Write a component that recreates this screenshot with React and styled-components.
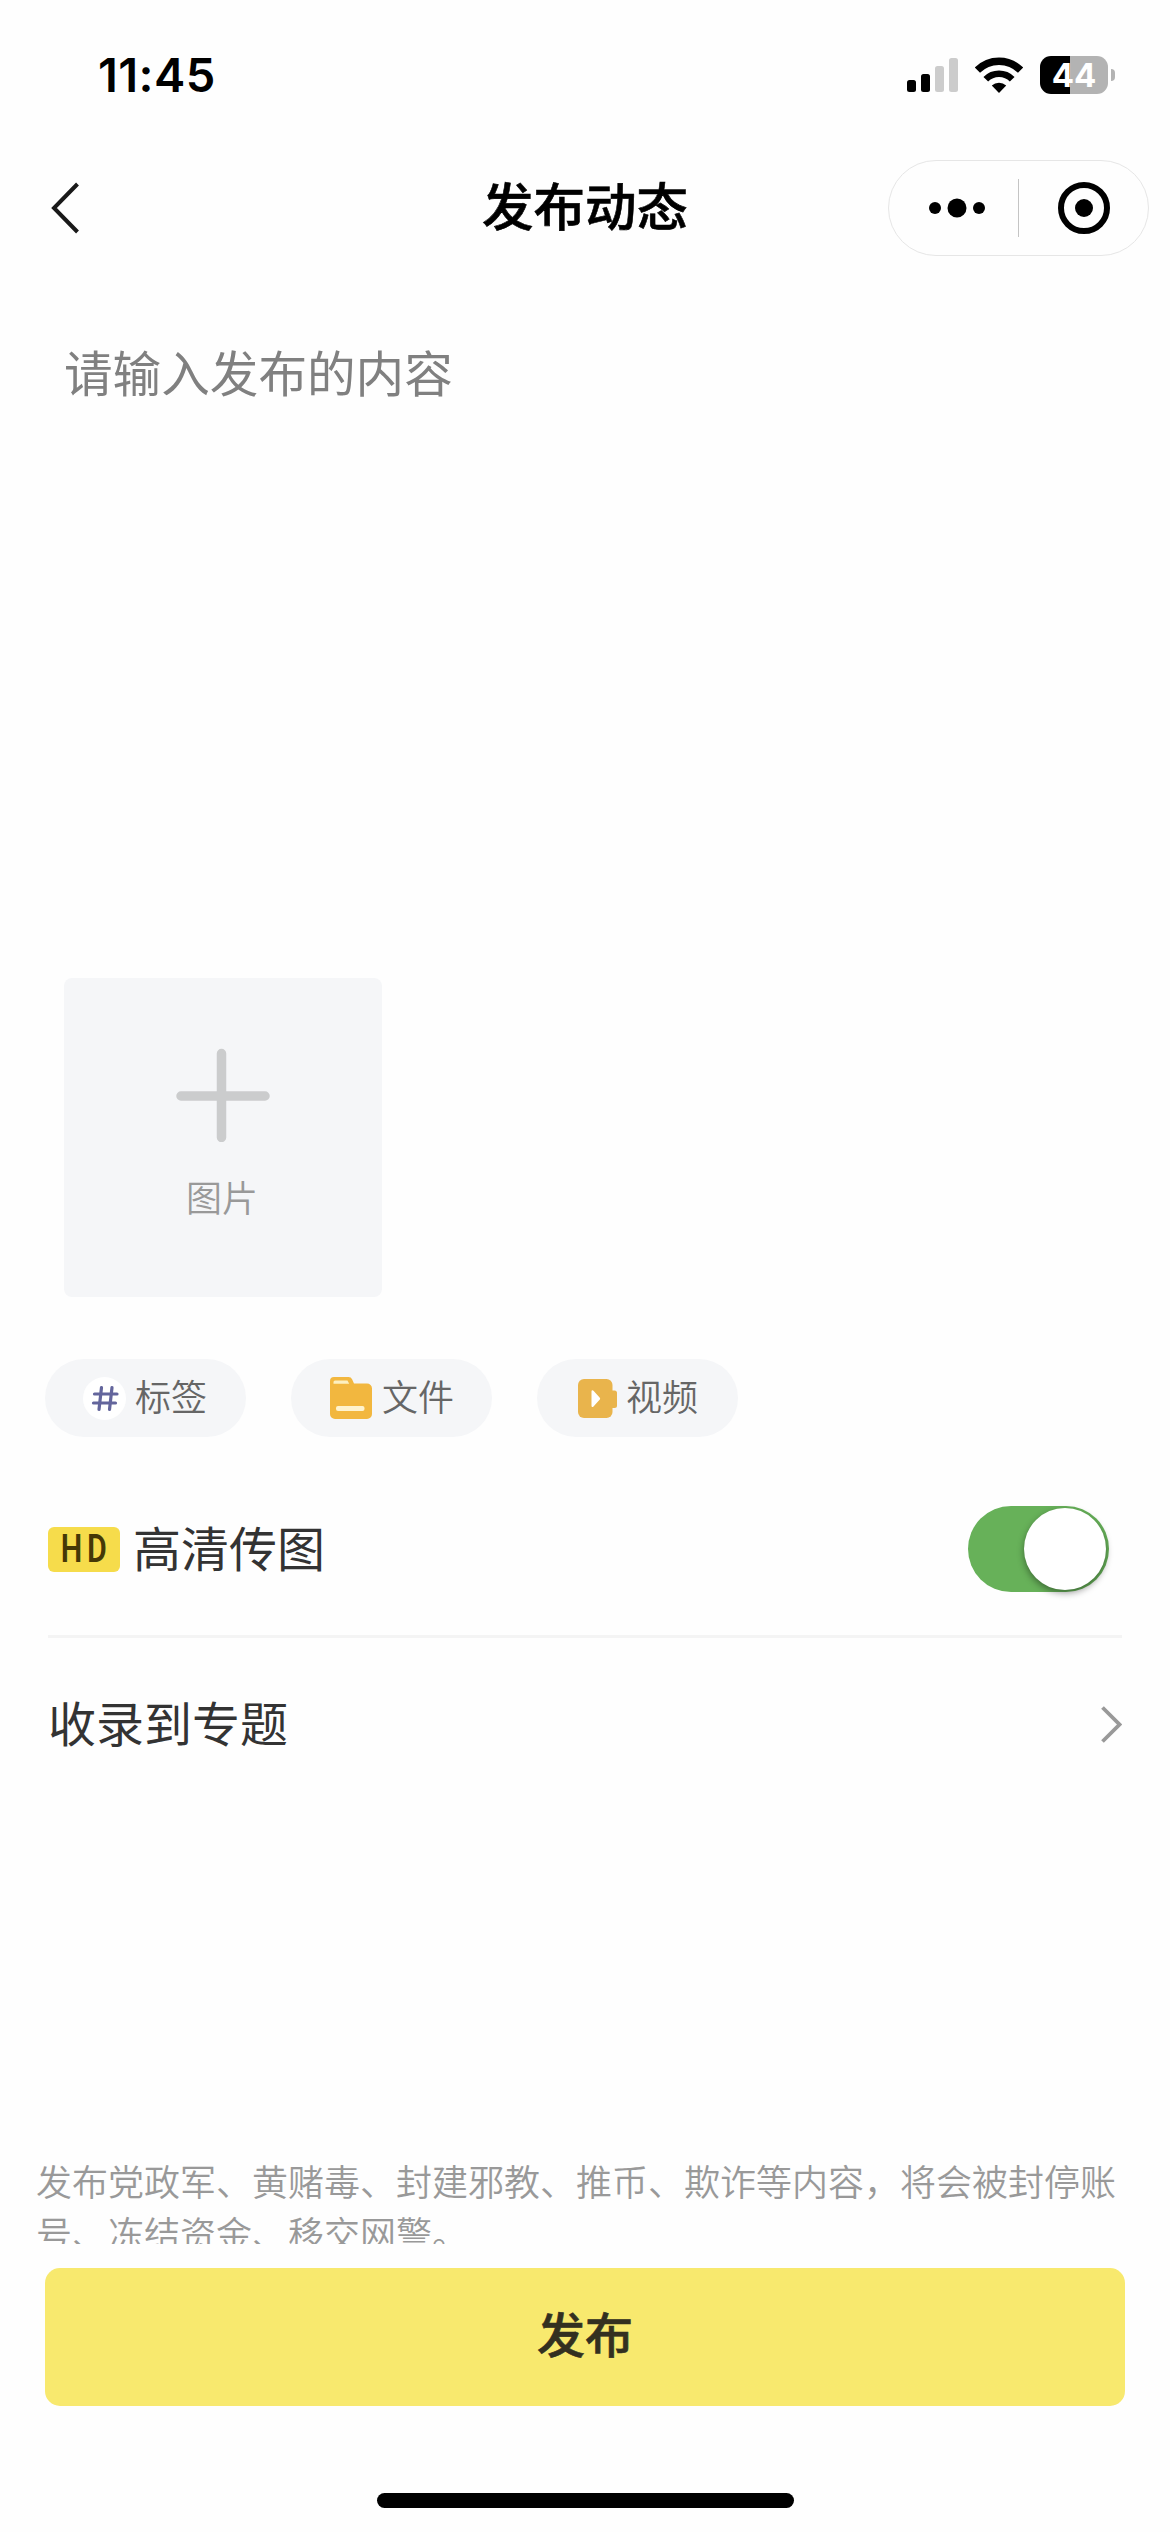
import React, { useState } from 'react';
import styled, { createGlobalStyle } from 'styled-components';

const GlobalStyle = createGlobalStyle`
  * {
    box-sizing: border-box;
  }

  body {
    margin: 0;
    background-color: #fefefe;
    font-family: "Noto Sans CJK SC", sans-serif;
  }
`;

const Screen = styled.div`
  width: 1170px;
  height: 2532px;
  display: flex;
  flex-direction: column;
  overflow: hidden;
  background-color: #fefefe;
`;

const StatusBar = styled.div`
  height: 149px;
  padding: 0 55px 0 98px;
  display: flex;
  align-items: center;
  justify-content: space-between;
  flex-shrink: 0;
`;

const Time = styled.span`
  font-family: Inter, sans-serif;
  font-size: 47px;
  font-weight: 600;
  line-height: 56px;
  letter-spacing: 0.4px;
  color: #000;
`;

const StatusIcons = styled.div`
  display: flex;
  align-items: center;
  gap: 17px;
`;

const Battery = styled.div`
  display: flex;
  align-items: center;
  gap: 3px;
`;

const BatteryBody = styled.div`
  width: 68px;
  height: 38px;
  border-radius: 11px;
  background: linear-gradient(to right, #000 ${(props) => props.$level}%, #b3b3b3 ${(props) => props.$level}%);
  color: #fff;
  font-family: Inter, sans-serif;
  font-size: 33px;
  font-weight: 700;
  line-height: 38px;
  text-align: center;
`;

const BatteryTip = styled.div`
  width: 4px;
  height: 12px;
  border-radius: 0 5px 5px 0;
  background-color: #b3b3b3;
`;

const NavBar = styled.div`
  height: 117px;
  padding: 0 21px 0 50px;
  display: grid;
  grid-template-columns: 1fr 240px 1fr;
  align-items: center;
  flex-shrink: 0;
`;

const BackButton = styled.button`
  display: flex;
  padding: 0;
  border: none;
  background-color: transparent;
  cursor: pointer;
`;

const Title = styled.h1`
  margin: 0 -20px 0 -49px;
  padding-bottom: 7px;
  font-size: 51.5px;
  font-weight: 500;
  line-height: 60px;
  text-align: center;
  white-space: nowrap;
  color: #000;
  -webkit-text-stroke: 0.6px #000;
`;

const Capsule = styled.div`
  justify-self: end;
  width: 261px;
  height: 96px;
  display: flex;
  align-items: center;
  border: 1px solid #e6e6e6;
  border-radius: 48px;
`;

const CapsuleButton = styled.button`
  width: 129px;
  display: flex;
  justify-content: center;
  padding: 0;
  padding-left: ${(props) => props.$shift || 0}px;
  border: none;
  background-color: transparent;
  cursor: pointer;
`;

const CapsuleLine = styled.div`
  width: 1px;
  height: 58px;
  background-color: #c4c4c4;
`;

const Content = styled.div`
  flex: 1;
  min-height: 0;
  display: flex;
  flex-direction: column;
  overflow: hidden;
`;

const Composer = styled.textarea`
  height: 712px;
  padding: 70px 64px 0;
  border: none;
  outline: none;
  resize: none;
  flex-shrink: 0;
  background-color: transparent;
  font-family: inherit;
  font-size: 48.6px;
  line-height: 70px;
  color: #333;

  &::placeholder {
    color: #808080;
    opacity: 1;
  }
`;

const Upload = styled.button`
  width: 318px;
  height: 319px;
  margin-left: 64px;
  padding: 70px 0 0;
  display: flex;
  flex-direction: column;
  align-items: center;
  flex-shrink: 0;
  border: none;
  border-radius: 8px;
  background-color: #f5f6f8;
  cursor: pointer;
`;

const UploadText = styled.span`
  margin-top: 27px;
  padding-right: 2px;
  font-family: "Noto Sans CJK SC", sans-serif;
  font-size: 36px;
  font-weight: 350;
  line-height: 54px;
  color: #999;
`;

const Chips = styled.div`
  margin: 62px 45px 0;
  display: flex;
  gap: 45px;
  flex-shrink: 0;
`;

const Chip = styled.button`
  width: 201px;
  height: 78px;
  padding: 0 0 0 ${(props) => props.$left}px;
  display: flex;
  align-items: center;
  gap: ${(props) => props.$gap}px;
  border: none;
  border-radius: 39px;
  background-color: #f5f6f8;
  white-space: nowrap;
  cursor: pointer;

  svg {
    flex-shrink: 0;
  }
`;

const ChipText = styled.span`
  padding-bottom: 6px;
  font-family: "Noto Sans CJK SC", sans-serif;
  font-size: 36px;
  font-weight: 350;
  line-height: 54px;
  color: #666;
`;

const Row = styled.div`
  height: ${(props) => props.$height}px;
  margin: ${(props) => props.$top || 0}px 48px 0;
  display: flex;
  align-items: center;
  flex-shrink: 0;
  border-bottom: ${(props) => (props.$divider ? '3px solid #f4f4f4' : 'none')};
`;

const RowLabel = styled.span`
  flex: 1;
  padding-bottom: 7px;
  font-size: 48px;
  line-height: 70px;
  color: #333;
`;

const HdBadge = styled.span`
  width: 72px;
  height: 45px;
  margin-right: 13px;
  display: flex;
  align-items: center;
  justify-content: center;
  border-radius: 6px;
  background-color: #f6dc4b;
`;

const HdText = styled.span`
  padding-left: 6px;
  font-family: Roboto, sans-serif;
  font-size: 38px;
  font-weight: 600;
  line-height: 45px;
  letter-spacing: 6px;
  transform: scaleX(0.8);
  color: #453806;
`;

const Toggle = styled.button`
  width: 141px;
  height: 86px;
  margin-right: 13px;
  padding: 0 3px;
  display: flex;
  align-items: center;
  justify-content: ${(props) => (props.$on ? 'flex-end' : 'flex-start')};
  border: none;
  border-radius: 43px;
  background-color: ${(props) => (props.$on ? '#67b159' : '#ddd')};
  cursor: pointer;
`;

const Knob = styled.span`
  width: 82px;
  height: 82px;
  border-radius: 50%;
  background-color: #fff;
  box-shadow: 0 3px 7px rgba(0, 0, 0, 0.4);
`;

const Notice = styled.p`
  margin: auto 0 0;
  padding: 0 36px;
  height: 89px;
  flex-shrink: 0;
  font-size: 36px;
  font-weight: 350;
  line-height: 51.5px;
  color: #999;
`;

const Footer = styled.div`
  height: 288px;
  padding: 24px 45px;
  display: flex;
  flex-direction: column;
  align-items: center;
  justify-content: space-between;
  flex-shrink: 0;
`;

const Publish = styled.button`
  width: 100%;
  height: 138px;
  padding: 0 0 10px;
  border: none;
  border-radius: 15px;
  background-color: #f8e96e;
  font-family: "Noto Sans CJK SC", sans-serif;
  font-size: 48px;
  font-weight: 500;
  line-height: 70px;
  color: #333020;
  -webkit-text-stroke: 0.6px #333020;
  cursor: pointer;
`;

const HomeIndicator = styled.div`
  width: 417px;
  height: 15px;
  border-radius: 8px;
  background-color: #000;
`;

const SignalIcon = () => (
  <svg width="51" height="35" viewBox="0 0 51 35">
    <rect x="0" y="23" width="9" height="12" rx="2.5" fill="#000" />
    <rect x="14" y="17" width="9" height="18" rx="2.5" fill="#000" />
    <rect x="28" y="9" width="9" height="26" rx="2.5" fill="#ccc" />
    <rect x="42" y="1" width="9" height="34" rx="2.5" fill="#ccc" />
  </svg>
);

const WifiIcon = () => (
  <svg width="48" height="36" viewBox="0 0 48 36">
    <path d="M2.4 13.200a30.500 30.500 0 0 1 43.200 0" fill="none" stroke="#000" strokeWidth="7.400" />
    <path d="M10.800 22.200a18.600 18.600 0 0 1 26.400 0" fill="none" stroke="#000" strokeWidth="6.600" />
    <path d="M24 36l-7.2-7.400a10.400 10.400 0 0 1 14.400 0z" fill="#000" />
  </svg>
);

const BackIcon = () => (
  <svg width="30" height="52" viewBox="0 0 30 52">
    <path d="M27.500 2L4 26l23.500 24" fill="none" stroke="#191919" strokeWidth="4" />
  </svg>
);

const MoreIcon = () => (
  <svg width="58" height="20" viewBox="0 0 58 20">
    <circle cx="7" cy="10" r="6" />
    <circle cx="29" cy="10" r="9.5" />
    <circle cx="51" cy="10" r="6" />
  </svg>
);

const CloseIcon = () => (
  <svg width="52" height="52" viewBox="0 0 52 52">
    <circle cx="26" cy="26" r="23" fill="none" stroke="#000" strokeWidth="6" />
    <circle cx="26" cy="26" r="9" />
  </svg>
);

const PlusIcon = () => (
  <svg width="94" height="94" viewBox="0 0 94 94">
    <path d="M45.500 5.500v84M5 48h84" fill="none" stroke="#cbcccd" strokeWidth="9.500" strokeLinecap="round" />
  </svg>
);

const TagIcon = () => (
  <svg width="43" height="43" viewBox="0 0 43 43">
    <circle cx="21.500" cy="21.500" r="21.500" fill="#fff" />
    <path
      d="M18.500 10.500l-2.500 22M29 10.500l-2.500 22M11.500 17h22.500M10.500 26h22"
      fill="none"
      stroke="#63659c"
      strokeWidth="3.200"
      strokeLinecap="round"
    />
  </svg>
);

const FolderIcon = () => (
  <svg width="42" height="42" viewBox="0 0 42 42">
    <path d="M0 4a4 4 0 0 1 4-4h14.500a4 4 0 0 1 3.600 2.200L24 6.500h13a5 5 0 0 1 5 5V37a5 5 0 0 1-5 5H5a5 5 0 0 1-5-5z" fill="#f2b73f" />
    <path d="M5 3.500h12.500l1.700 3.300H3.500V5A1.500 1.500 0 0 1 5 3.500z" fill="#fdf0c0" />
    <rect x="6" y="29" width="28.500" height="5" rx="2" fill="#fff3cd" />
  </svg>
);

const VideoIcon = () => (
  <svg width="39" height="39" viewBox="0 0 39 39">
    <rect x="0" y="0" width="34.500" height="39" rx="6" fill="#e9b44c" />
    <rect x="30" y="11.500" width="9" height="17.500" rx="2.500" fill="#e9b44c" />
    <path d="M13.500 12.500c0-1.500 1.200-1.700 2-.8l6.300 7c.5.600.5 1.200 0 1.800l-6.300 7c-.8.900-2 .7-2-.8z" fill="#fff" />
  </svg>
);

const ArrowIcon = () => (
  <svg width="21" height="37" viewBox="0 0 21 37">
    <path d="M1.500 1.500L18.500 18.500 1.500 35.500" fill="none" stroke="#999" strokeWidth="3.800" />
  </svg>
);

const App = () => {
  const [content, setContent] = useState('');
  const [hd, setHd] = useState(true);

  return (
    <>
      <GlobalStyle />
      <Screen>
        <StatusBar>
          <Time>11:45</Time>
          <StatusIcons>
            <SignalIcon />
            <WifiIcon />
            <Battery>
              <BatteryBody $level={44}>44</BatteryBody>
              <BatteryTip />
            </Battery>
          </StatusIcons>
        </StatusBar>
        <NavBar>
          <BackButton>
            <BackIcon />
          </BackButton>
          <Title>发布动态</Title>
          <Capsule>
            <CapsuleButton $shift={7}>
              <MoreIcon />
            </CapsuleButton>
            <CapsuleLine />
            <CapsuleButton>
              <CloseIcon />
            </CapsuleButton>
          </Capsule>
        </NavBar>
        <Content>
          <Composer
            placeholder="请输入发布的内容"
            value={content}
            onChange={(e) => setContent(e.target.value)}
          />
          <Upload>
            <PlusIcon />
            <UploadText>图片</UploadText>
          </Upload>
          <Chips>
            <Chip $left={38} $gap={9}>
              <TagIcon />
              <ChipText>标签</ChipText>
            </Chip>
            <Chip $left={39} $gap={10}>
              <FolderIcon />
              <ChipText>文件</ChipText>
            </Chip>
            <Chip $left={41} $gap={9}>
              <VideoIcon />
              <ChipText>视频</ChipText>
            </Chip>
          </Chips>
          <Row $height={175} $top={26} $divider>
            <HdBadge>
              <HdText>HD</HdText>
            </HdBadge>
            <RowLabel>高清传图</RowLabel>
            <Toggle $on={hd} onClick={() => setHd(!hd)}>
              <Knob />
            </Toggle>
          </Row>
          <Row $height={172}>
            <RowLabel>收录到专题</RowLabel>
            <ArrowIcon />
          </Row>
          <Notice>
            发布党政军、黄赌毒、封建邪教、推币、欺诈等内容，将会被封停账号、冻结资金、移交网警。
          </Notice>
        </Content>
        <Footer>
          <Publish>发布</Publish>
          <HomeIndicator />
        </Footer>
      </Screen>
    </>
  );
};

export default App;
